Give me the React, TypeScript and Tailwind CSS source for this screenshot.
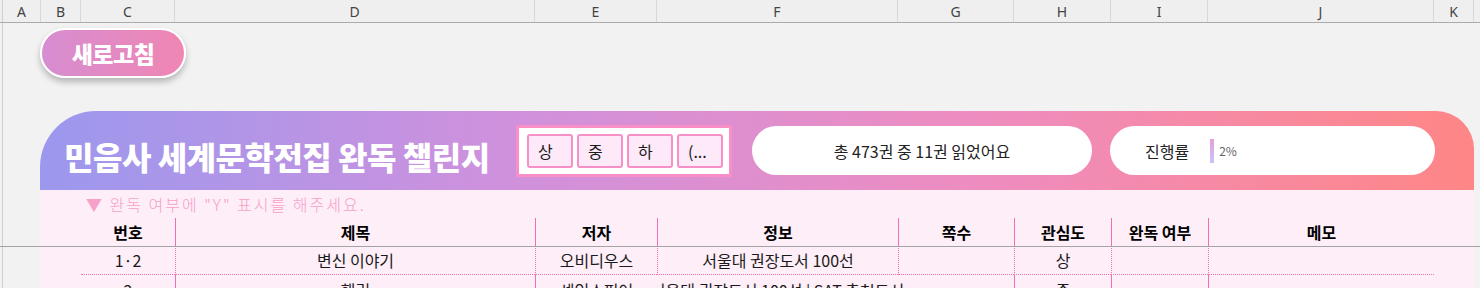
import React from "react";

const sheetCols = [
  { name: "A", w: "w-[38px]" },
  { name: "B", w: "w-[40px]" },
  { name: "C", w: "w-[94px]" },
  { name: "D", w: "w-[360px]" },
  { name: "E", w: "w-[122px]" },
  { name: "F", w: "w-[241px]" },
  { name: "G", w: "w-[116px]" },
  { name: "H", w: "w-[97px]" },
  { name: "I", w: "w-[97px]" },
  { name: "J", w: "w-[226px]" },
  { name: "K", w: "w-[40px]" },
];

const kr = "font-['Noto_Sans_CJK_KR',sans-serif]";

// table columns inside the card: B(part) C D E F G H I J K
const tableGrid =
  "grid grid-cols-[41px_94px_360px_122px_241px_116px_97px_97px_226px_40px]";

const headers = ["번호", "제목", "저자", "정보", "쪽수", "관심도", "완독 여부", "메모"];

const pink = "border-[#f06eb2]";

const HeaderCell = ({ children, line }: { children?: React.ReactNode; line?: boolean }) => (
  <div
    className={`flex items-center justify-center font-bold text-[16px] text-black ${
      line ? `border-l ${pink}` : ""
    }`}
  >
    {children}
  </div>
);

const DataCell = ({
  children,
  line,
  dotted,
}: {
  children?: React.ReactNode;
  line?: boolean;
  dotted?: boolean;
}) => (
  <div
    className={`flex items-center justify-center text-[16px] text-[#1a1a1a] whitespace-nowrap ${
      line ? `border-l ${pink}` : ""
    } ${dotted ? "border-b border-dotted border-b-[#f06eb2]" : ""}`}
  >
    {children}
  </div>
);

const levels = ["상", "중", "하", "(..."];

export default function App() {
  return (
    <div className={`relative w-[1480px] h-[288px] overflow-hidden bg-[#f2f2f2] ${kr}`}>
      {/* column letters */}
      <div className="flex h-[23px] bg-[#efefef] border-b border-[#ababab]">
        <div className="w-[3px] border-r border-[#d0d0d0]" />
        {sheetCols.map((c) => (
          <div
            key={c.name}
            className={`${c.w} shrink-0 flex items-center justify-center border-r border-[#d8d8d8] font-['Noto_Sans',sans-serif] text-[14px] text-[#444]`}
          >
            {c.name}
          </div>
        ))}
        <div className="flex-1" />
      </div>

      <div className="flex h-[265px]">
        <div className="w-[3px] shrink-0 border-r border-[#cfcfcf]" />
        <div className="flex-1 pl-[37px] pt-[5px]">
          {/* refresh button */}
          <button className="w-[146px] h-[50px] rounded-full border-2 border-white bg-[linear-gradient(90deg,#d68dd1,#f086b3)] shadow-[0_4px_6px_rgba(0,0,0,0.25)] text-white text-[23px] font-black tracking-[-0.5px] flex items-center justify-center">
            새로고침
          </button>

          {/* card */}
          <div className="mt-[33px] w-[1434px] h-[200px] rounded-tl-[56px] rounded-tr-[38px] overflow-hidden bg-[#fdeef8]">
            <div className="h-[79px] flex items-center bg-[linear-gradient(90deg,#9b98ee_0%,#cf91dd_32%,#ef8cbe_67%,#fe8686_100%)]">
              <div className="w-[476px] pl-[24px] pt-[10px] text-white text-[32px] font-black leading-none tracking-[-0.5px] whitespace-nowrap">
                민음사 세계문학전집 완독 챌린지
              </div>
              <div className="w-[216px] h-[52px] border-[3px] border-[#f98fc6] bg-white flex items-center gap-[4px] pl-[8px]">
                {levels.map((l) => (
                  <div
                    key={l}
                    className="w-[46px] h-[34px] rounded-[3px] border-2 border-[#f690c6] bg-[#fde9f8] flex items-center pl-[9px] text-[16px] text-[#1a1a1a]"
                  >
                    {l}
                  </div>
                ))}
              </div>
              <div className="ml-[20px] w-[340px] h-[49px] rounded-full bg-white flex items-center justify-center text-[16px] text-[#222]">
                총 473권 중 11권 읽었어요
              </div>
              <div className="ml-[18px] w-[325px] h-[49px] rounded-full bg-white flex items-center pl-[35px] text-[16px] text-[#222]">
                <span>진행률</span>
                <span className="ml-[21px] w-[4px] h-[24px] bg-[linear-gradient(180deg,#e3a0dc,#c9c3f7)]" />
                <span className="ml-[5px] text-[12px] text-[#666]">2%</span>
              </div>
            </div>

            <div className="h-[28px] flex items-center pl-[46px] text-[16px] text-[#f7a0c9] font-light tracking-[2px]">
              ▼ 완독 여부에 "Y" 표시를 해주세요.
            </div>

            <div className={`${tableGrid} h-[28px]`}>
              <div />
              <HeaderCell>{headers[0]}</HeaderCell>
              {headers.slice(1).map((h) => (
                <HeaderCell key={h} line>
                  {h}
                </HeaderCell>
              ))}
              <div />
            </div>

            <div className={`${tableGrid} h-[29px]`}>
              <div />
              <DataCell dotted>1·2</DataCell>
              <DataCell line dotted>변신 이야기</DataCell>
              <DataCell line dotted>오비디우스</DataCell>
              <DataCell line dotted>서울대 권장도서 100선</DataCell>
              <DataCell line dotted />
              <DataCell line dotted>상</DataCell>
              <DataCell line dotted />
              <DataCell line dotted />
              <div />
            </div>

            <div className={`${tableGrid} h-[29px]`}>
              <div />
              <DataCell>2</DataCell>
              <DataCell line>햄릿</DataCell>
              <DataCell line>셰익스피어</DataCell>
              <div className="col-span-2 overflow-hidden">
                <div className="w-[241px] h-full flex items-center justify-center whitespace-nowrap text-[16px] text-[#1a1a1a]">
                  서울대 권장도서 100선 | SAT 추천도서
                </div>
              </div>
              <DataCell line>중</DataCell>
              <DataCell line />
              <DataCell line />
              <div />
            </div>
          </div>
        </div>
      </div>

      {/* frozen pane divider */}
      <div className="absolute left-0 right-0 top-[246px] h-px bg-[#a3a3a3]" />
    </div>
  );
}
